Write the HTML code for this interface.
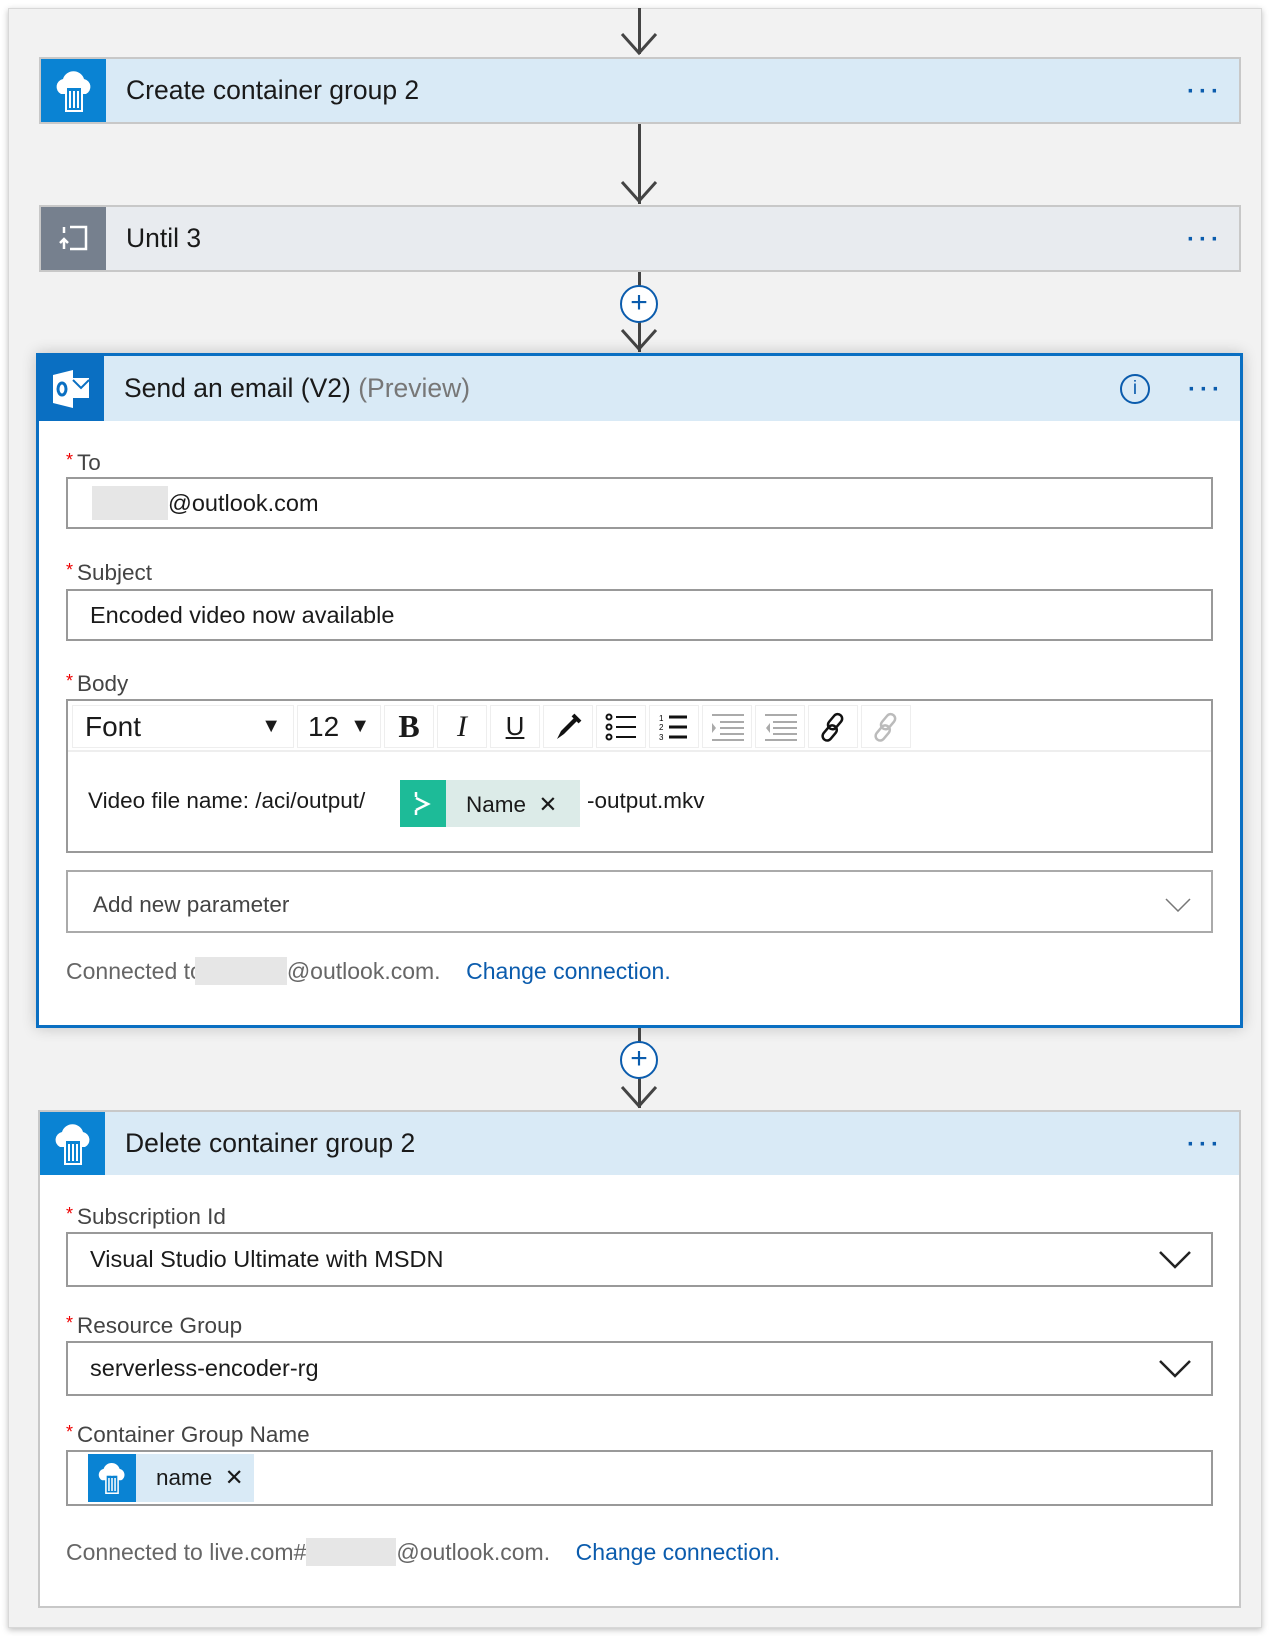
<!DOCTYPE html>
<html><head><meta charset="utf-8"><style>
*{margin:0;padding:0;box-sizing:border-box}
body{width:1269px;height:1636px;background:#fff;position:relative;overflow:hidden;font-family:"Liberation Sans",sans-serif;color:#1a1a1a}
.a{position:absolute}
.bg{left:8px;top:8px;width:1254px;height:1620px;background:#f2f2f2;border:1px solid #d8d8d8;box-shadow:0 2px 6px rgba(0,0,0,.25)}
.line{width:3px;background:#444;left:638px}
.arr{left:620px;width:38px;height:24px}
.hdr{display:flex;align-items:center}
.ico{width:65px;height:100%;display:flex;align-items:center;justify-content:center}
.ttl{font-size:26.5px;padding-left:20px;flex:1}
.dots{font-size:24px;color:#0b5cad;letter-spacing:4px;padding-right:16px;font-weight:bold;margin-top:2px;line-height:10px}
.lbl{font-size:22.5px;color:#444;left:66px}
.lbl:before{content:"*";color:#e00;font-size:18px;margin-right:4px;vertical-align:4px}
.inp{left:66px;width:1147px;border:2px solid #999;background:#fff;font-size:23.5px;display:flex;align-items:center;padding-left:22px}
.plus{width:38px;height:38px;border:2px solid #0b5cad;border-radius:50%;background:#fff;left:620px;color:#0b5cad;font-size:30px;line-height:32px;text-align:center}
.tb{position:absolute;top:4px;height:43px;border:1px solid #eee;background:#fff;display:flex;align-items:center;justify-content:center;font-size:28px}
.blur{display:inline-block;background:#e6e6e6}
.link{color:#0b5cad}
.gray{color:#777}
.chev{position:absolute;right:20px}
</style></head><body>
<div class="a bg"></div>

<div class="a line" style="top:8px;height:46px"></div>
<svg class="a arr" style="top:32px" viewBox="0 0 38 24"><path d="M2 2 L19 21 L36 2" stroke="#444" stroke-width="3" fill="none"/></svg>

<div class="a hdr" style="left:39px;top:57px;width:1202px;height:67px;background:#d9eaf6;border:2px solid #c8c8c8">
 <div class="ico" style="background:#0a83d3;height:100%"><svg width="42" height="46" viewBox="0 0 42 46"><path d="M8 26 a8 8 0 0 1 2-15 a11 11 0 0 1 21 0 a8 8 0 0 1 2 15z" fill="#fff"/><rect x="13" y="19" width="16" height="24" fill="#0a83d3" stroke="#fff" stroke-width="2"/><path d="M17 23v17M21 23v17M25 23v17M21 20V8M17 12l4-4 4 4" stroke="#fff" stroke-width="2" fill="none"/></svg></div>
 <div class="ttl">Create container group 2</div><div class="dots">···</div>
</div>

<div class="a line" style="top:124px;height:80px"></div>
<svg class="a arr" style="top:180px" viewBox="0 0 38 24"><path d="M2 2 L19 21 L36 2" stroke="#444" stroke-width="3" fill="none"/></svg>

<div class="a hdr" style="left:39px;top:205px;width:1202px;height:67px;background:#e8ebef;border:2px solid #c8c8c8">
 <div class="ico" style="background:#76808e"><svg width="36" height="30" viewBox="0 0 36 30"><path d="M8 3v6M14 3h16v22H14M8 25V15M4 19l4-4 4 4" stroke="#fff" stroke-width="2.5" fill="none"/></svg></div>
 <div class="ttl">Until 3</div><div class="dots">···</div>
</div>

<div class="a line" style="top:272px;height:80px"></div>
<div class="a plus" style="top:285px">+</div>
<svg class="a arr" style="top:328px" viewBox="0 0 38 24"><path d="M2 2 L19 21 L36 2" stroke="#444" stroke-width="3" fill="none"/></svg>

<div class="a" style="left:36px;top:353px;width:1207px;height:675px;background:#fff;border:3px solid #0a6fc2;box-shadow:0 0 14px rgba(0,0,0,.2)"></div>
<div class="a hdr" style="left:39px;top:356px;width:1201px;height:65px;background:#d9eaf6">
 <div class="ico" style="background:#0a6fc2"><svg width="42" height="42" viewBox="0 0 42 42"><path d="M2 7 L22 2 V40 L2 35z" fill="#fff"/><rect x="22" y="10" width="16" height="20" fill="#fff"/><path d="M22 12 l8 8 l8-8" stroke="#0a6fc2" stroke-width="2" fill="none"/><ellipse cx="11" cy="21" rx="4" ry="6" fill="none" stroke="#0a6fc2" stroke-width="3"/></svg></div>
 <div class="ttl">Send an email (V2) <span class="gray">(Preview)</span></div>
 <div style="width:30px;height:30px;border:2px solid #0b5cad;border-radius:50%;color:#0b5cad;text-align:center;font-size:19px;line-height:26px;margin-right:38px;font-family:'Liberation Sans',sans-serif">i</div>
 <div class="dots">···</div>
</div>

<div class="a lbl" style="top:450px">To</div>
<div class="a inp" style="top:477px;height:52px;padding-left:24px"><span class="blur" style="width:76px;height:34px"></span>@outlook.com</div>

<div class="a lbl" style="top:560px">Subject</div>
<div class="a inp" style="top:589px;height:52px">Encoded video now available</div>

<div class="a lbl" style="top:671px">Body</div>
<div class="a" style="left:66px;top:699px;width:1147px;height:154px;border:2px solid #999;background:#fff">
 <div class="a" style="left:0;top:0;width:1143px;height:51px;border-bottom:2px solid #eee"></div>
 <div class="tb" style="left:4px;width:222px;justify-content:space-between;padding:0 12px;font-size:28px"><span>Font</span><span style="font-size:20px">▼</span></div>
 <div class="tb" style="left:229px;width:84px;justify-content:space-between;padding:0 10px;font-size:28px"><span>12</span><span style="font-size:20px">▼</span></div>
 <div class="tb" style="left:316px;width:50px;font-weight:bold;font-family:'Liberation Serif',serif;font-size:32px">B</div>
 <div class="tb" style="left:369px;width:50px;font-style:italic;font-family:'Liberation Serif',serif;font-size:30px">I</div>
 <div class="tb" style="left:422px;width:50px;text-decoration:underline;font-size:26px">U</div>
 <div class="tb" style="left:475px;width:50px"><svg width="30" height="30" viewBox="0 0 30 30"><path d="M4 27 L8 19 L22 5 L25 8 L11 22z" fill="#111"/><path d="M20 3 l7 7" stroke="#111" stroke-width="4"/></svg></div>
 <div class="tb" style="left:528px;width:50px"><svg width="32" height="28" viewBox="0 0 32 28"><g fill="none" stroke="#111" stroke-width="2"><circle cx="4" cy="4" r="2.5"/><circle cx="4" cy="14" r="2.5"/><circle cx="4" cy="24" r="2.5"/><path d="M11 4h20M11 14h20M11 24h20"/></g></svg></div>
 <div class="tb" style="left:581px;width:50px"><svg width="32" height="28" viewBox="0 0 32 28"><g stroke="#111" stroke-width="3"><path d="M11 4h18M11 14h18M11 24h18"/></g><text x="1" y="8" font-size="8">1</text><text x="1" y="17" font-size="8">2</text><text x="1" y="27" font-size="8">3</text></svg></div>
 <div class="tb" style="left:634px;width:50px"><svg width="34" height="28" viewBox="0 0 34 28"><g stroke="#aaa" stroke-width="2"><path d="M2 2h32M10 9h24M10 15h24M10 21h24M2 27h32"/></g><path d="M2 10l4 5-4 5z" fill="#aaa"/></svg></div>
 <div class="tb" style="left:687px;width:50px"><svg width="34" height="28" viewBox="0 0 34 28"><g stroke="#aaa" stroke-width="2"><path d="M2 2h32M10 9h24M10 15h24M10 21h24M2 27h32"/></g><path d="M7 10l-4 5 4 5z" fill="#aaa"/></svg></div>
 <div class="tb" style="left:740px;width:50px"><svg width="32" height="32" viewBox="0 0 32 32"><g fill="none" stroke="#111" stroke-width="2.5"><rect x="14" y="2" width="9" height="17" rx="4.5" transform="rotate(40 18 10)"/><rect x="8" y="13" width="9" height="17" rx="4.5" transform="rotate(40 12 22)"/></g></svg></div>
 <div class="tb" style="left:793px;width:50px"><svg width="32" height="32" viewBox="0 0 32 32"><g fill="none" stroke="#bbb" stroke-width="2.5"><rect x="14" y="2" width="9" height="17" rx="4.5" transform="rotate(40 18 10)"/><rect x="8" y="13" width="9" height="17" rx="4.5" transform="rotate(40 12 22)"/></g></svg></div>
 <div class="a" style="left:20px;top:87px;font-size:22.5px;white-space:nowrap">Video file name: /aci/output/</div>
 <div class="a" style="left:332px;top:79px;width:46px;height:47px;background:#1dbb98"><svg width="46" height="47" viewBox="0 0 46 47"><path d="M16 12v5M16 30v5M16 18l12 6-12 6" stroke="#fff" stroke-width="2.5" fill="none"/></svg></div>
 <div class="a" style="left:378px;top:79px;width:134px;height:47px;background:#dcebe8;font-size:22.5px;padding:12px 0 0 20px">Name &nbsp;✕</div>
 <div class="a" style="left:519px;top:87px;font-size:22.5px">-output.mkv</div>
</div>

<div class="a inp" style="top:870px;height:63px;border-color:#aaa;color:#444;font-size:22.5px;padding-left:25px;padding-top:6px">Add new parameter<svg class="chev" width="26" height="14" viewBox="0 0 26 14"><path d="M1 1l12 12 12-12" stroke="#777" stroke-width="1.5" fill="none"/></svg></div>

<div class="a" style="left:66px;top:957px;font-size:23px;color:#666;white-space:nowrap">Connected to<span class="blur" style="width:92px;height:28px;vertical-align:-6px;margin-left:-8px"></span>@outlook.com. &nbsp;&nbsp; <span class="link">Change connection.</span></div>

<div class="a line" style="top:1028px;height:80px"></div>
<div class="a plus" style="top:1041px">+</div>
<svg class="a arr" style="top:1085px" viewBox="0 0 38 24"><path d="M2 2 L19 21 L36 2" stroke="#444" stroke-width="3" fill="none"/></svg>

<div class="a" style="left:38px;top:1110px;width:1203px;height:498px;background:#fff;border:2px solid #c8c8c8"></div>
<div class="a hdr" style="left:40px;top:1112px;width:1199px;height:63px;background:#d9eaf6">
 <div class="ico" style="background:#0a83d3"><svg width="42" height="46" viewBox="0 0 42 46"><path d="M8 26 a8 8 0 0 1 2-15 a11 11 0 0 1 21 0 a8 8 0 0 1 2 15z" fill="#fff"/><rect x="13" y="19" width="16" height="24" fill="#0a83d3" stroke="#fff" stroke-width="2"/><path d="M17 23v17M21 23v17M25 23v17M21 20V8M17 12l4-4 4 4" stroke="#fff" stroke-width="2" fill="none"/></svg></div>
 <div class="ttl">Delete container group 2</div><div class="dots">···</div>
</div>

<div class="a lbl" style="top:1204px">Subscription Id</div>
<div class="a inp" style="top:1232px;height:55px">Visual Studio Ultimate with MSDN<svg class="chev" width="32" height="18" viewBox="0 0 32 18"><path d="M1 1l15 15 15-15" stroke="#222" stroke-width="2.5" fill="none"/></svg></div>

<div class="a lbl" style="top:1313px">Resource Group</div>
<div class="a inp" style="top:1341px;height:55px">serverless-encoder-rg<svg class="chev" width="32" height="18" viewBox="0 0 32 18"><path d="M1 1l15 15 15-15" stroke="#222" stroke-width="2.5" fill="none"/></svg></div>

<div class="a lbl" style="top:1422px">Container Group Name</div>
<div class="a inp" style="top:1450px;height:56px;padding-left:20px">
 <div style="width:48px;height:48px;background:#0a83d3;display:flex;align-items:center;justify-content:center"><svg width="32" height="36" viewBox="0 0 42 46"><path d="M8 26 a8 8 0 0 1 2-15 a11 11 0 0 1 21 0 a8 8 0 0 1 2 15z" fill="#fff"/><rect x="13" y="19" width="16" height="24" fill="#0a83d3" stroke="#fff" stroke-width="2"/><path d="M17 23v17M21 23v17M25 23v17M21 20V8M17 12l4-4 4 4" stroke="#fff" stroke-width="2" fill="none"/></svg></div>
 <div style="width:118px;height:48px;background:#d9eaf6;padding:11px 0 0 20px;font-size:22.5px">name &nbsp;✕</div>
</div>

<div class="a" style="left:66px;top:1538px;font-size:23px;color:#666;white-space:nowrap">Connected to live.com#<span class="blur" style="width:90px;height:28px;vertical-align:-6px"></span>@outlook.com. &nbsp;&nbsp; <span class="link">Change connection.</span></div>
</body></html>
